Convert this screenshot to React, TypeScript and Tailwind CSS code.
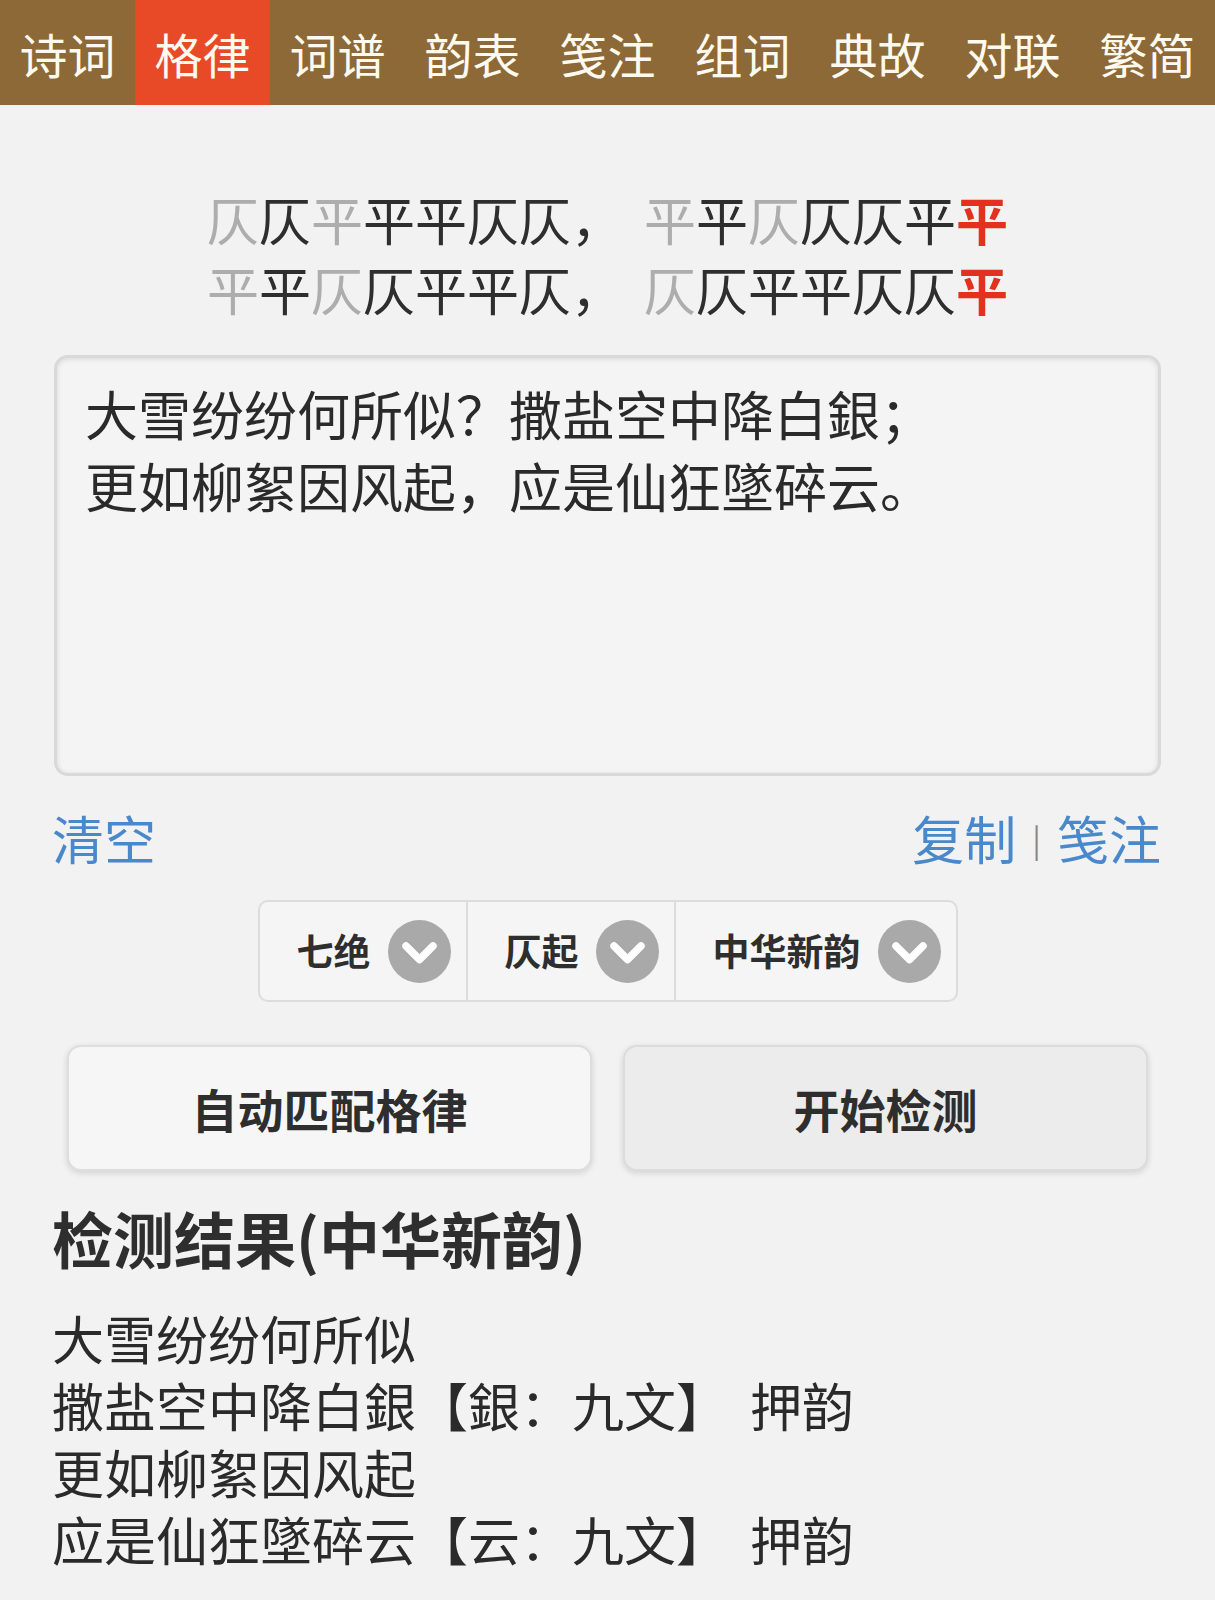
import { Fragment } from 'react'

const tabs = ['诗词', '格律', '词谱', '韵表', '笺注', '组词', '典故', '对联', '繁简']

// g = optional (gray), b = fixed (dark), r = rhyme (red)
const patternLines: [string, string][] = [
  ['仄仄平平平仄仄，', 'gbgbbbbb'],
  ['平平仄仄仄平平', 'gbgbbbr'],
  ['平平仄仄平平仄，', 'gbgbbbbb'],
  ['仄仄平平仄仄平', 'gbbbbbr'],
]

const toneClass: Record<string, string> = {
  g: 'text-[#adadad]',
  b: 'text-[#2e2e2e]',
  r: 'text-[#e2321f] font-bold',
}

const results = [
  { line: '大雪纷纷何所似' },
  { line: '撒盐空中降白銀', rhyme: '【銀：九文】', tag: '押韵' },
  { line: '更如柳絮因风起' },
  { line: '应是仙狂墜碎云', rhyme: '【云：九文】', tag: '押韵' },
]

function Chevron() {
  return (
    <svg width="63" height="63" viewBox="0 0 63 63" className="shrink-0">
      <circle cx="31.5" cy="31.5" r="31.5" fill="#a9a9a9" />
      <path
        d="M18 26 L31.5 39.5 L45 26"
        fill="none"
        stroke="#fff"
        strokeWidth="7.5"
        strokeLinecap="round"
        strokeLinejoin="round"
      />
    </svg>
  )
}

function PatternRow({ a, b }: { a: [string, string]; b: [string, string] }) {
  const render = ([text, tones]: [string, string]) =>
    Array.from(text).map((ch, i) => (
      <span key={i} className={toneClass[tones[i]] ?? toneClass.b}>
        {ch}
      </span>
    ))
  return (
    <div className="whitespace-pre">
      {render(a)}
      <span className="inline-block w-[21px]" />
      {render(b)}
    </div>
  )
}

export default function App() {
  const selects = ['七绝', '仄起', '中华新韵']

  return (
    <div
      className="min-h-[1600px] bg-[#f2f2f2] text-[#2e2e2e]"
      style={{ fontFamily: '"Noto Sans CJK SC", "Noto Sans", sans-serif' }}
    >
      {/* Top nav */}
      <nav className="grid grid-cols-9 h-[105px] bg-[#8c6937]">
        {tabs.map((t) => (
          <div
            key={t}
            className={`flex items-center justify-center text-[48px] leading-none text-[#fffaf0] ${
              t === '格律' ? 'bg-[#e84a28]' : ''
            }`}
          >
            {t}
          </div>
        ))}
      </nav>

      <div className="px-[54px]">
        {/* Pattern */}
        <div className="mt-[79px] flex flex-col items-center text-[52px] leading-[70px]">
          <PatternRow a={patternLines[0]} b={patternLines[1]} />
          <PatternRow a={patternLines[2]} b={patternLines[3]} />
        </div>

        {/* Input area */}
        <div className="mt-[31px] h-[421px] rounded-[14px] border-[3px] border-[#d9d9d9] bg-[#f4f4f4] pl-[28px] pt-[19px] text-[53px] leading-[72px] text-[#2a2a2a] shadow-[inset_0_1px_5px_rgba(0,0,0,0.12)]">
          <div>大雪纷纷何所似？撒盐空中降白銀；</div>
          <div>更如柳絮因风起，应是仙狂墜碎云。</div>
        </div>

        {/* Links */}
        <div className="mt-[30px] flex items-center justify-between text-[52px] leading-[64px] text-[#4a88cc]">
          <span className="-ml-[2px]">清空</span>
          <div className="flex items-center">
            <span>复制</span>
            <span className="mx-[16px] text-[32px] text-[#8a8a8a]">|</span>
            <span>笺注</span>
          </div>
        </div>

        {/* Selects */}
        <div className="mt-[30px] flex justify-center">
          <div className="flex h-[102px] rounded-[10px] border-2 border-[#dcdcdc] bg-[#f5f5f5]">
            {selects.map((s, i) => (
              <Fragment key={s}>
                {i > 0 && <div className="w-[2px] bg-[#dcdcdc]" />}
                <div className="flex items-center gap-[17px] pl-[37px] pr-[15px] text-[37px] font-bold text-[#2e2e2e]">
                  <span>{s}</span>
                  <Chevron />
                </div>
              </Fragment>
            ))}
          </div>
        </div>

        {/* Buttons */}
        <div className="mt-[43px] grid grid-cols-2 gap-[31px] px-[13px]">
          <button className="h-[126px] rounded-[14px] border-2 border-[#dedede] bg-[#f6f6f6] text-[46px] font-bold text-[#2e2e2e] shadow-[0_2px_6px_rgba(0,0,0,0.14)]">
            自动匹配格律
          </button>
          <button className="h-[126px] rounded-[14px] border-2 border-[#dcdcdc] bg-[#ececec] text-[46px] font-bold text-[#2e2e2e] shadow-[0_2px_6px_rgba(0,0,0,0.14)]">
            开始检测
          </button>
        </div>

        {/* Results */}
        <h2 className="mt-[31px] -ml-[2px] text-[61px] font-bold leading-[72px] text-[#2e2e2e]">
          检测结果(中华新韵)
        </h2>
        <div className="mt-[30px] -ml-[2px] text-[52px] leading-[67px] text-[#2a2a2a]">
          {results.map((r) => (
            <div key={r.line} className="whitespace-pre">
              {r.line}
              {r.rhyme && (
                <>
                  {r.rhyme}
                  <span className="inline-block w-[22px]" />
                  {r.tag}
                </>
              )}
            </div>
          ))}
        </div>
      </div>
    </div>
  )
}
